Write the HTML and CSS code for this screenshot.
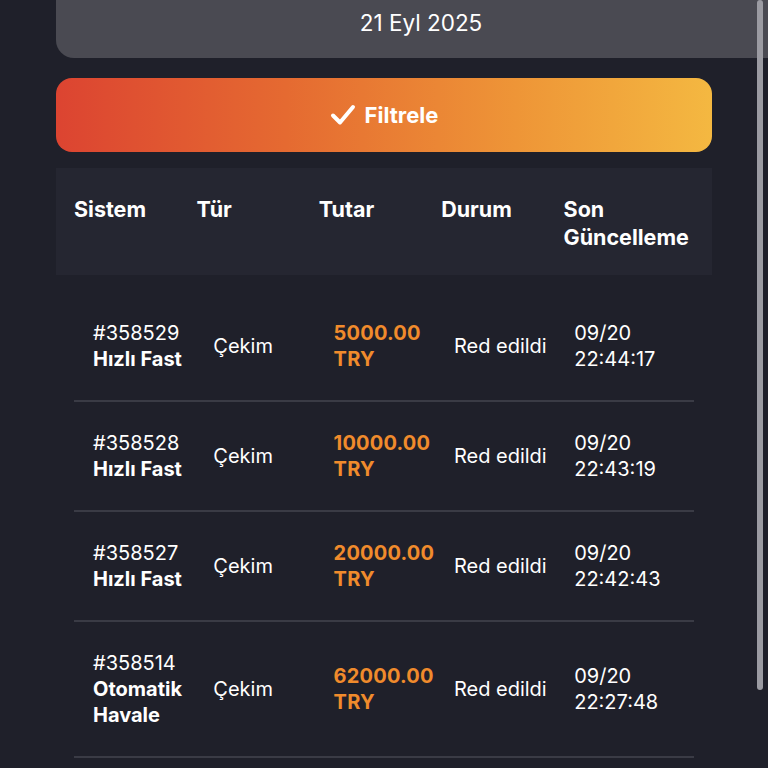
FILE: index.html
```html
<!DOCTYPE html>
<html lang="tr">
<head>
<meta charset="utf-8">
<link rel="stylesheet" href="styles.css">
</head>
<body>
<div class="page">
  <div class="datebox">21 Eyl 2025</div>
  <div class="btn">
    <svg class="check" width="26" height="22" viewBox="0 0 26 22"><path d="M3 11.5 L10 18.5 L23 3" fill="none" stroke="#fff" stroke-width="4" stroke-linecap="round" stroke-linejoin="round"/></svg>
    <span>Filtrele</span>
  </div>
  <div class="table">
    <div class="thead">
      <div>Sistem</div><div>Tür</div><div>Tutar</div><div>Durum</div><div>Son<br>Güncelleme</div>
    </div>
    <div class="tbody">
      <div class="row">
        <div>#358529<br><b>Hızlı Fast</b></div>
        <div>Çekim</div>
        <div class="amt">5000.00<br>TRY</div>
        <div>Red edildi</div>
        <div>09/20<br>22:44:17</div>
      </div>
      <div class="row">
        <div>#358528<br><b>Hızlı Fast</b></div>
        <div>Çekim</div>
        <div class="amt">10000.00<br>TRY</div>
        <div>Red edildi</div>
        <div>09/20<br>22:43:19</div>
      </div>
      <div class="row">
        <div>#358527<br><b>Hızlı Fast</b></div>
        <div>Çekim</div>
        <div class="amt">20000.00<br>TRY</div>
        <div>Red edildi</div>
        <div>09/20<br>22:42:43</div>
      </div>
      <div class="row">
        <div>#358514<br><b>Otomatik<br>Havale</b></div>
        <div>Çekim</div>
        <div class="amt">62000.00<br>TRY</div>
        <div>Red edildi</div>
        <div>09/20<br>22:27:48</div>
      </div>
    </div>
  </div>
</div>
<div class="scrollbar"></div>
</body>
</html>
```

FILE: styles.css
```css
html, body {
  margin: 0;
  padding: 0;
  background: #1f202a;
  overflow: hidden;
  width: 768px;
  height: 768px;
}
body {
  font-family: Inter, "Noto Sans", sans-serif;
  color: #fff;
  position: relative;
}
.page {
  padding-left: 56px;
}
.datebox {
  width: 730px;
  height: 51px;
  padding-top: 7px;
  background: #4a4a52;
  border-radius: 0 0 0 18px;
  text-align: center;
  font-size: 22.5px;
  line-height: 32px;
}
.btn {
  margin-top: 20px;
  width: 656px;
  height: 74px;
  border-radius: 16px;
  background: linear-gradient(90deg, #dc4431 0%, #e56a31 35%, #ee9537 70%, #f4b841 100%);
  display: flex;
  align-items: center;
  justify-content: center;
  gap: 9px;
  font-weight: 700;
  font-size: 22px;
}
.check {
  display: block;
}
.table {
  margin-top: 16px;
  width: 656px;
}
.thead {
  background: #252631;
  height: 80px;
  padding: 27px 0 0 18px;
  display: grid;
  grid-template-columns: repeat(5, 122.4px);
  font-weight: 700;
  font-size: 21.5px;
  line-height: 28px;
}
.tbody {
  margin: 17px 18px 0;
}
.row {
  display: grid;
  grid-template-columns: repeat(5, 120.3px);
  align-items: center;
  padding: 28px 0 28px 19px;
  border-bottom: 2px solid #3a3b45;
  font-size: 20px;
  line-height: 26px;
}
.row b {
  font-weight: 700;
}
.amt {
  color: #f08b2c;
  font-weight: 700;
  letter-spacing: 0.2px;
}
.scrollbar {
  position: absolute;
  left: 757px;
  top: 0;
  width: 6px;
  height: 690px;
  border-radius: 3px;
  background: #9b9ba2;
}
```
